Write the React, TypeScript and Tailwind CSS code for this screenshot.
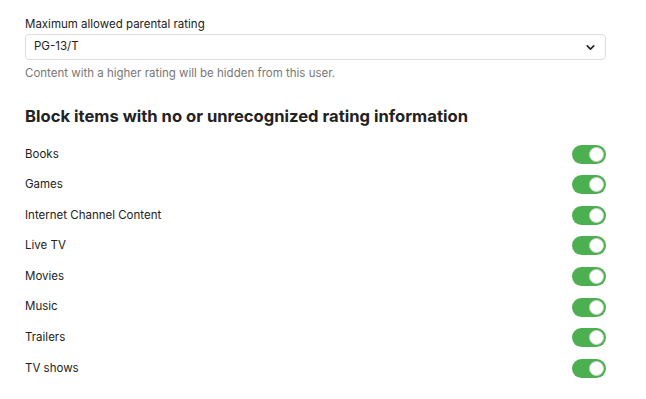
import { ChevronDown } from 'lucide-react';

const categories = ['Books', 'Games', 'Internet Channel Content', 'Live TV', 'Movies', 'Music', 'Trailers', 'TV shows'];

function Toggle() {
  return (
    <div className="relative w-[34px] h-[19px] rounded-full bg-[#4caf50]">
      <div className="absolute right-[2px] top-[2px] w-[15px] h-[15px] rounded-full bg-white border border-[#d0d0d0]" />
    </div>
  );
}

export default function App() {
  return (
    <div className="w-[646px] h-[399px] bg-white font-['Inter',sans-serif] text-[#222] pl-[25px] pr-[40px] pt-[16px]">
      <label className="block text-[11.5px] leading-[16px] mb-[2px]">Maximum allowed parental rating</label>
      <div className="flex items-center justify-between h-[26px] border border-[#dddddd] rounded-[4px] pl-[8px] pr-[8px] text-[11.5px]">
        <span>PG-13/T</span>
        <ChevronDown className="w-[13px] h-[13px] text-[#222]" strokeWidth={3} />
      </div>
      <p className="mt-[5px] text-[11.5px] leading-[16px] text-[#777]">Content with a higher rating will be hidden from this user.</p>

      <h2 className="mt-[23px] text-[16.6px] leading-[24px] font-bold">Block items with no or unrecognized rating information</h2>

      <div className="mt-[11px] flex flex-col">
        {categories.map((c) => (
          <div key={c} className="flex items-center justify-between h-[30.57px]">
            <span className="text-[11.5px]">{c}</span>
            <Toggle />
          </div>
        ))}
      </div>
    </div>
  );
}
